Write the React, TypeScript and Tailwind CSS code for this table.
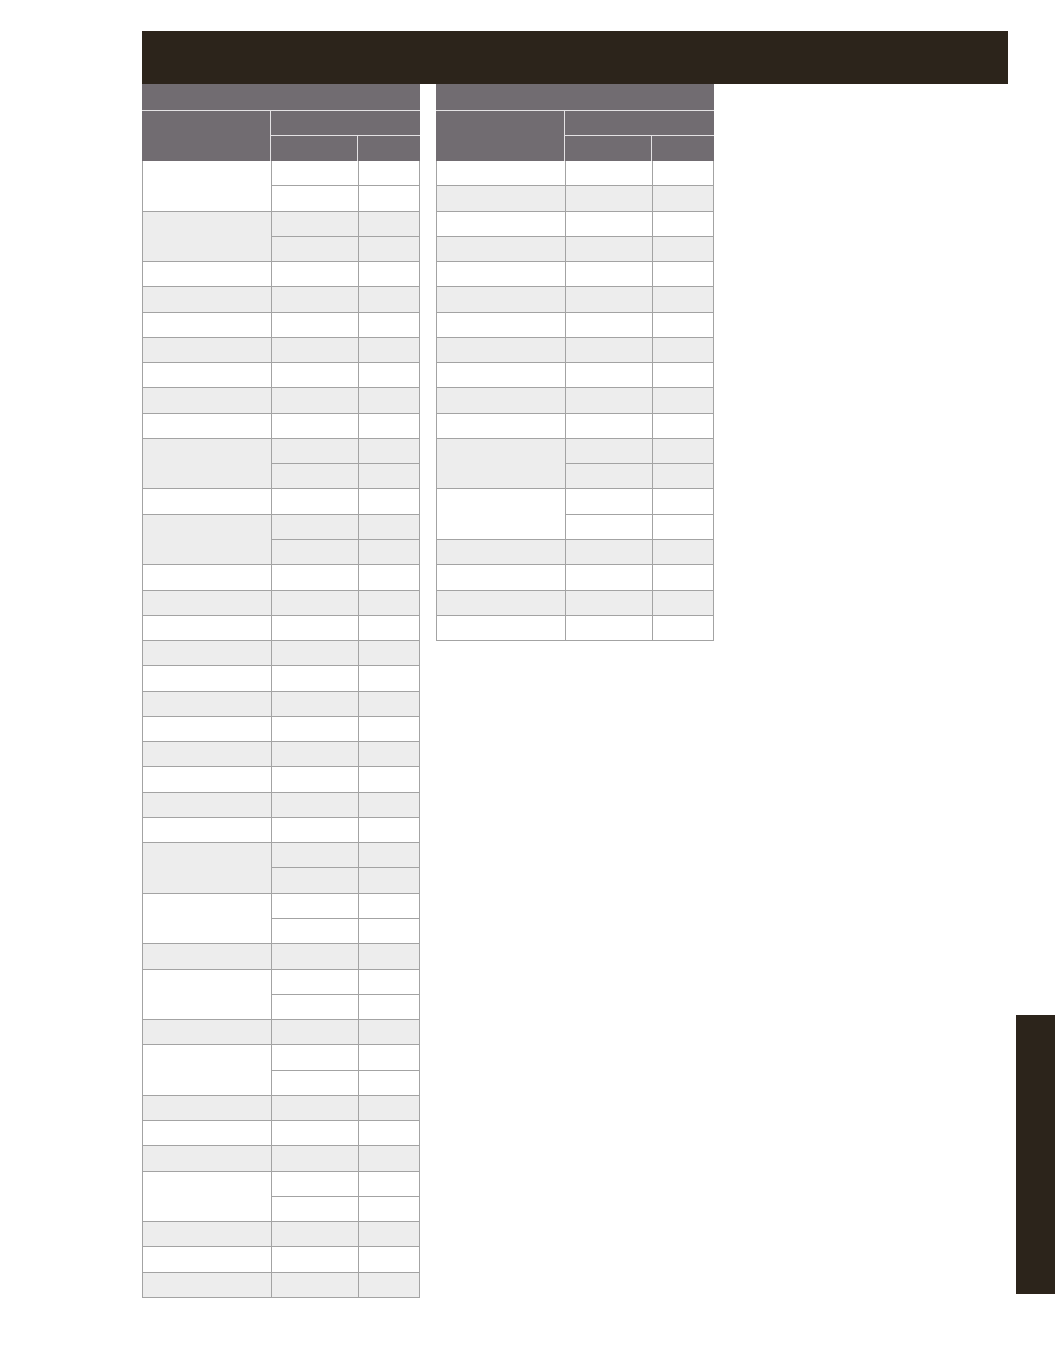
const leftGroups = [
  2, 2, 1, 1, 1, 1, 1, 1, 1, 2, 1, 2, 1, 1, 1, 1, 1, 1, 1, 1, 1, 1, 1, 2, 2, 1, 2, 1, 2, 1, 1, 1, 2, 1, 1, 1,
];
const rightGroups = [1, 1, 1, 1, 1, 1, 1, 1, 1, 1, 1, 2, 2, 1, 1, 1, 1];

function SpecTable({ groups }: { groups: number[] }) {
  return (
    <div className="w-[278px] shrink-0">
      <div className="h-[27px] border-b border-[#e4e2e4] bg-[#716c71]" />
      <div className="flex h-[50px] bg-[#716c71]">
        <div className="w-[129px] border-r border-[#e4e2e4]" />
        <div className="flex flex-1 flex-col">
          <div className="h-[25px] border-b border-[#e4e2e4]" />
          <div className="flex flex-1">
            <div className="w-[87px] border-r border-[#e4e2e4]" />
            <div className="flex-1" />
          </div>
        </div>
      </div>
      <div className="border-x border-[#a3a3a3]">
        {groups.map((span, i) => (
          <div key={i} className={`flex ${i % 2 === 1 ? "bg-[#ededed]" : "bg-white"}`}>
            <div className="w-[129px] border-b border-r border-[#a3a3a3]" />
            <div className="flex flex-1 flex-col">
              {Array.from({ length: span }).map((_, j) => (
                <div key={j} className="flex h-[25.27px] border-b border-[#a3a3a3]">
                  <div className="w-[87px] border-r border-[#a3a3a3]" />
                  <div className="flex-1" />
                </div>
              ))}
            </div>
          </div>
        ))}
      </div>
    </div>
  );
}

export default function App() {
  return (
    <div className="flex min-h-[1369px] w-[1055px] bg-white font-['Liberation_Sans',sans-serif]">
      <div className="w-[1016px] shrink-0 pl-[142px] pt-[31px]">
        <div className="h-[53px] w-[866px] bg-[#2c241b]" />
        <div className="flex items-start gap-[16px]">
          <SpecTable groups={leftGroups} />
          <SpecTable groups={rightGroups} />
        </div>
      </div>
      <div className="mt-[1015px] h-[279px] w-[39px] shrink-0 bg-[#2c241b]" />
    </div>
  );
}
